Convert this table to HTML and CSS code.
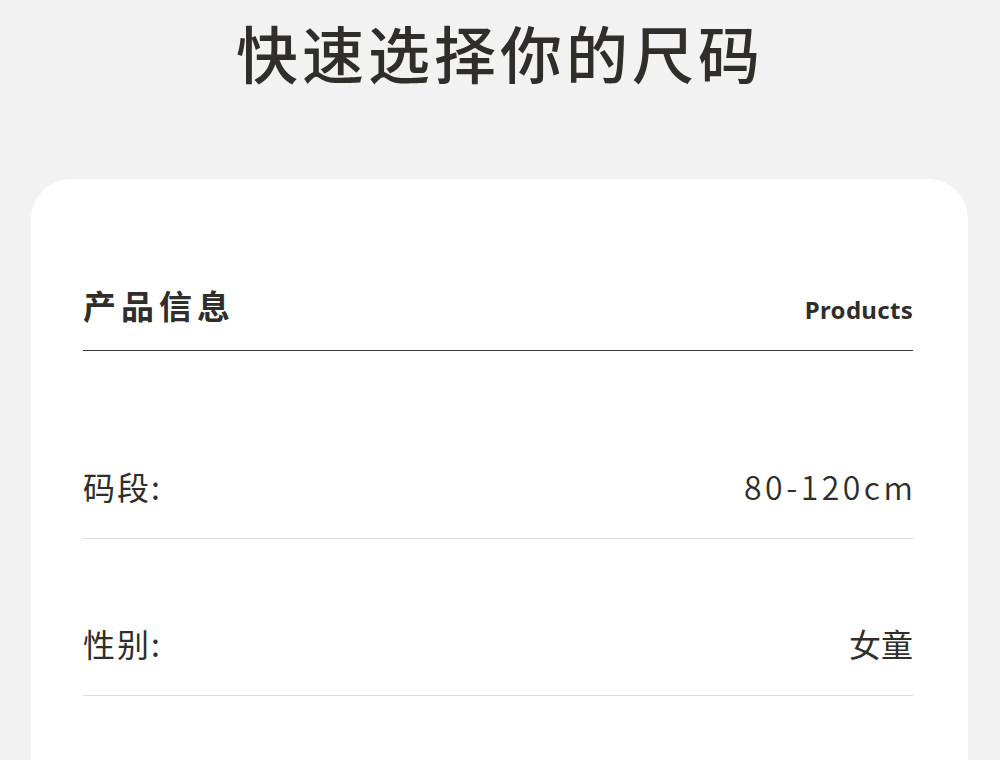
FILE: index.html
```html
<!DOCTYPE html>
<html lang="zh">
<head>
<meta charset="utf-8">
<link rel="stylesheet" href="styles.css">
</head>
<body>
<h1 class="title">快速选择你的尺码</h1>
<section class="card">
  <div class="card-head">
    <span class="head-cn">产品信息</span>
    <span class="head-en">Products</span>
  </div>
  <div class="rows">
    <div class="row"><span class="label">码段:</span><span class="value num">80-120cm</span></div>
    <div class="row"><span class="label">性别:</span><span class="value">女童</span></div>
  </div>
</section>
</body>
</html>
```
FILE: styles.css
```css
html, body {
  margin: 0;
  padding: 0;
}
body {
  background: #f2f2f2;
  font-family: "Noto Sans CJK SC", "Noto Sans", sans-serif;
  color: #2f2e2a;
  height: 760px;
  overflow: hidden;
}
.title {
  margin: 0;
  padding-top: 15px;
  text-align: center;
  font-size: 62px;
  line-height: 74px;
  font-weight: 500;
  letter-spacing: 4px;
  color: #2f2e2a;
}
.card {
  margin: 90px 32px 0 31px;
  background: #fff;
  border-radius: 40px;
  padding: 106px 55px 200px 52px;
}
.card-head {
  display: flex;
  justify-content: space-between;
  align-items: baseline;
  padding-bottom: 24px;
  border-bottom: 1.5px solid #3a3a36;
}
.head-cn {
  font-size: 33px;
  line-height: 40px;
  font-weight: 700;
  letter-spacing: 5px;
}
.head-en {
  font-family: "Noto Sans", sans-serif;
  font-size: 24px;
  font-weight: 700;
  letter-spacing: 0.3px;
}
.rows {
  padding-top: 31px;
}
.row {
  display: flex;
  justify-content: space-between;
  align-items: center;
  padding: 88px 0 36px;
  border-bottom: 1.5px solid #dcdcdc;
  font-size: 32px;
  line-height: 32px;
}
.label {
  letter-spacing: 2px;
}
.value.num {
  font-weight: 350;
  letter-spacing: 3.5px;
  margin-right: -3.5px;
}
```
